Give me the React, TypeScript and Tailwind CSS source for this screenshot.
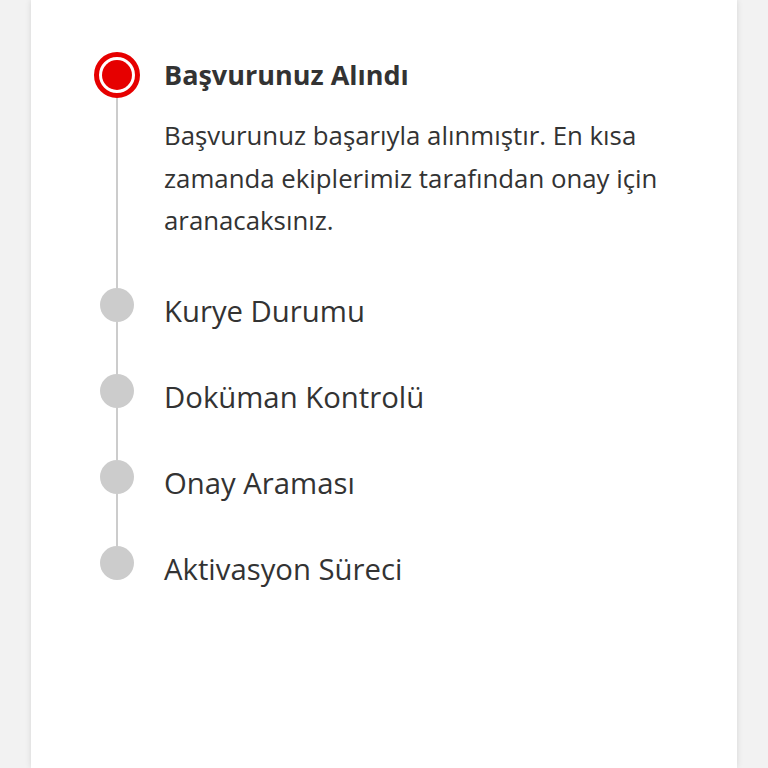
import React from "react";

const font = { fontFamily: '"Open Sans", "Noto Sans", sans-serif' };

const steps = ["Kurye Durumu", "Doküman Kontrolü", "Onay Araması", "Aktivasyon Süreci"];

export default function App() {
  return (
    <div className="h-[768px] w-[768px] overflow-hidden bg-[#f2f2f2]" style={font}>
      <div className="ml-[31px] h-[768px] w-[706px] bg-white pl-[63px] pt-[52px] shadow-[0_0_6px_rgba(0,0,0,0.12)]">
        {/* Active step */}
        <div className="flex">
          <div className="flex w-[46px] flex-col items-center">
            <div className="flex h-[46px] w-[46px] items-center justify-center rounded-full border-[5px] border-[#e60000] bg-white">
              <div className="h-[30px] w-[30px] rounded-full bg-[#e60000]" />
            </div>
            <div className="w-[2px] flex-1 bg-[#cccccc]" />
          </div>
          <div className="ml-[24px] flex-1 pb-[46.5px] text-[#333333]">
            <div className="text-[27px] font-bold leading-[46px]">Başvurunuz Alındı</div>
            <p className="mt-[16px] w-[510px] text-[25.8px] leading-[42.5px]">
              Başvurunuz başarıyla alınmıştır. En kısa zamanda ekiplerimiz tarafından onay için aranacaksınız.
            </p>
          </div>
        </div>
        {steps.map((s, i) => (
          <div key={s} className="flex">
            <div className="flex w-[46px] flex-col items-center">
              <div className="h-[34px] w-[34px] rounded-full bg-[#cccccc]" />
              {i < steps.length - 1 && <div className="w-[2px] flex-1 bg-[#cccccc]" />}
            </div>
            <div className="ml-[24px] flex-1 pb-[46px] text-[#333333]">
              <div className="mt-[6px] text-[29.3px] leading-[34px]">{s}</div>
            </div>
          </div>
        ))}
      </div>
    </div>
  );
}
